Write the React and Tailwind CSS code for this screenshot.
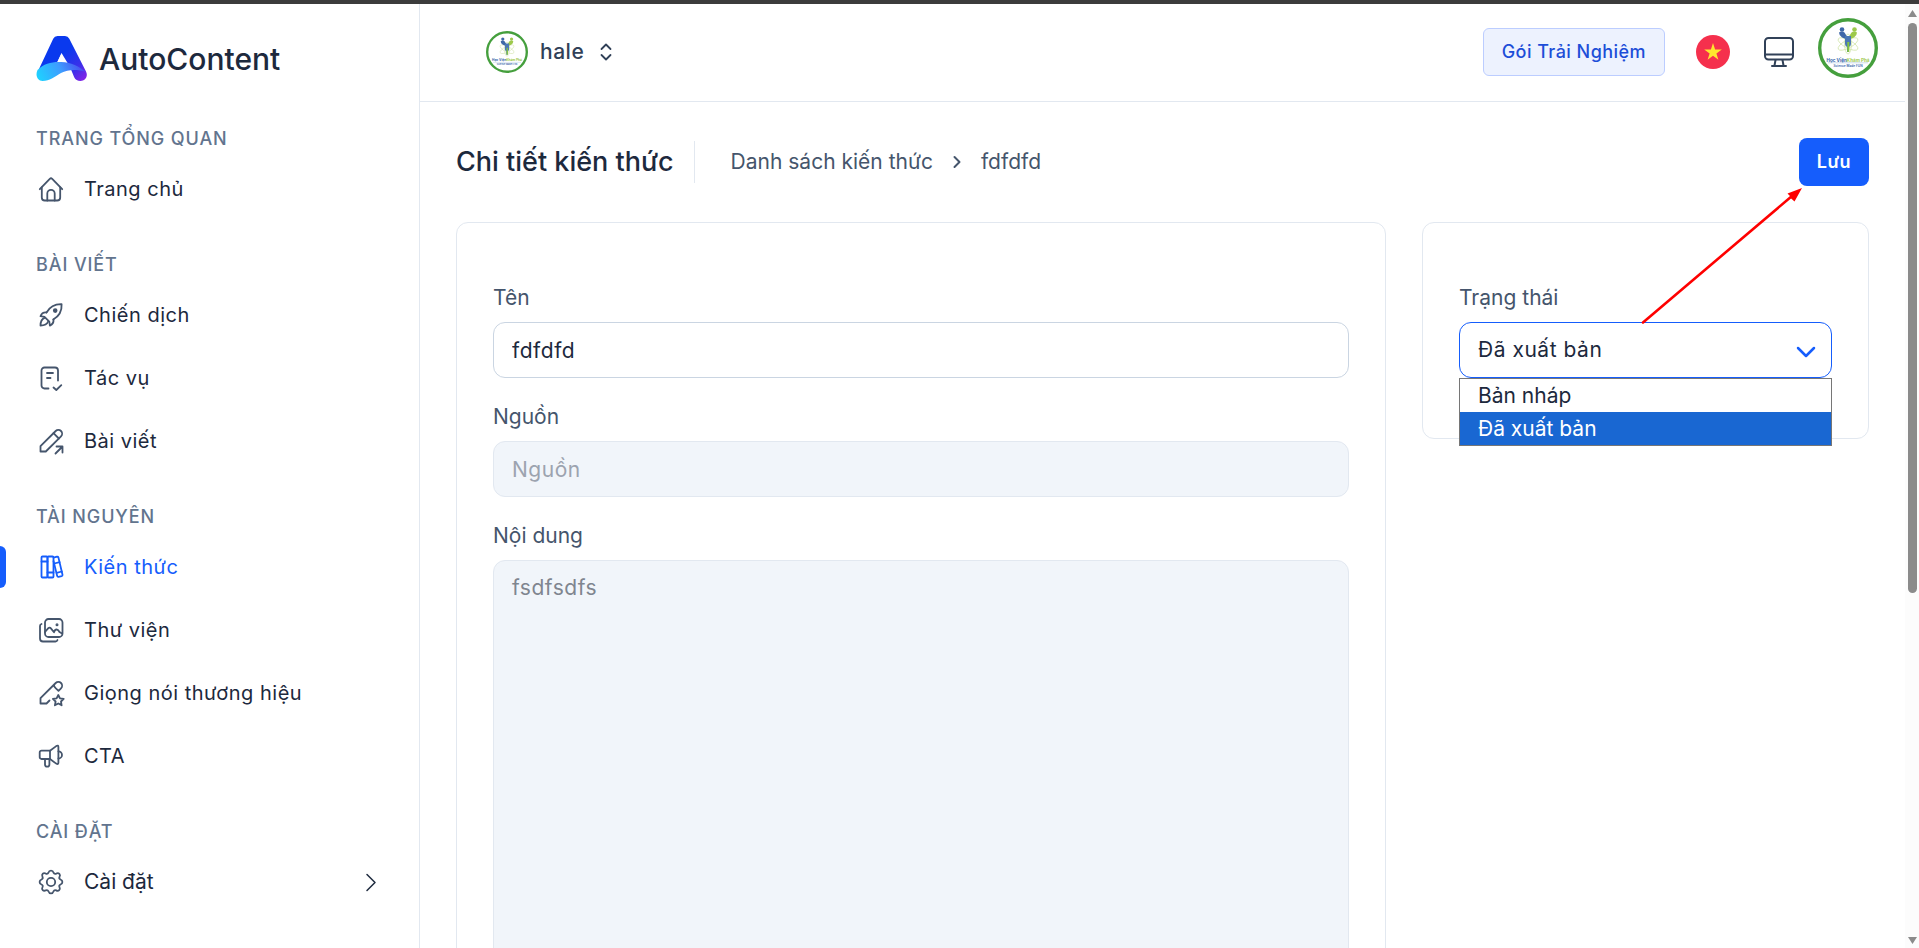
import React, { useState } from "react";

/* ---------- icons ---------- */

const Icon = ({ children, size = "size-7", strokeWidth = 1.8 }) => (
  <svg
    className={`${size} shrink-0`}
    viewBox="0 0 28 28"
    fill="none"
    stroke="currentColor"
    strokeWidth={strokeWidth}
    strokeLinecap="round"
    strokeLinejoin="round"
    aria-hidden="true"
  >
    {children}
  </svg>
);

const HomeIcon = () => (
  <Icon>
    <path d="M2.8 14.2 12.8 3.8q1.2-1.1 2.4 0L25.2 14.2" />
    <path d="M4.800 12.500V22.500a3 3 0 0 0 3 3h12.400a3 3 0 0 0 3-3V12.500" />
    <path d="M10.300 25.500V18.500a3.700 3.700 0 0 1 7.400 0v7" />
  </Icon>
);

const RocketIcon = () => (
  <Icon>
    <path d="M9.500 11.500C13 5.500 18 3 24.600 3.200c.4 6.600-2.200 11.700-8.300 15.300" />
    <path d="M9.500 11.500c-3-.3-5 1.100-6 3.700l4 .6 4.800 4.800.6 4c2.600-1.200 3.900-3.300 3.600-6.100" />
    <path d="M7.500 16.800c-3.300 1.400-4 4.300-4 7.700 3.400 0 6.400-.7 7.700-4" />
    <circle cx="18.200" cy="9.600" r="1.400" fill="currentColor" />
  </Icon>
);

const TaskIcon = () => (
  <Icon>
    <path d="M11.500 24.500H7.500a3 3 0 0 1-3-3V6.500a3 3 0 0 1 3-3h10.500a3 3 0 0 1 3 3v10" />
    <path d="M10 9h6M10 14h3.500" />
    <path d="m16.500 23.500 2.800 2.500 5-4.800" />
  </Icon>
);

const PenShareIcon = () => (
  <Icon>
    <path d="M3.500 24.500v-5.300L18.700 4a3.700 3.700 0 0 1 5.300 5.300L8.800 24.500z" />
    <path d="m16.500 6.200 5.300 5.300" />
    <path d="m18.500 26.500 7-7M19.500 19.500h6v6" />
  </Icon>
);

const BooksIcon = () => (
  <Icon>
    <rect x="4.500" y="3.500" width="6" height="21" rx="1" />
    <rect x="10.500" y="3.500" width="6" height="21" rx="1" />
    <path d="m16.500 4.600 3.600-1q1-.2 1.300.8l4.100 17.400q.2 1-.8 1.300l-3.200.8q-1 .2-1.300-.8L16.500 8" />
    <path d="M4.500 8.500h6M10.500 19.500h6M17.300 10.500l5.300-1.300M19.600 19.800l5.200-1.300" />
  </Icon>
);

const GalleryIcon = () => (
  <Icon>
    <rect x="8" y="3" width="17.500" height="18" rx="3.500" />
    <path d="M4.500 8Q3 8.500 3 10v12.500a3 3 0 0 0 3 3h12.500q1.500 0 2-1.500" />
    <path d="m8 16 3.300-3.800q1.400-1.200 2.600.2l3.100 3.800q1-3 2.800-2.700 1.500.2 2.700 2.500l2.500 1.500" />
    <circle cx="20" cy="8.700" r="0.600" fill="currentColor" />
  </Icon>
);

const PenStarIcon = () => (
  <Icon>
    <path d="M12.500 21.500 9.500 24.500h-6v-5.300L18.700 4a3.700 3.700 0 0 1 5.300 5.300l-2.500 2.500-2.600-2.400q-2-2-2-3.500" />
    <path d="m21.300 16 1.700 3.300 3.700.6-2.700 2.600.6 3.800-3.300-1.800-3.400 1.800.7-3.800-2.700-2.600 3.700-.6z" />
  </Icon>
);

const MegaphoneIcon = () => (
  <Icon>
    <path d="M4.500 8.700H13V17H4.500A1.800 1.800 0 0 1 2.700 15.200v-4.700a1.800 1.800 0 0 1 1.800-1.800z" />
    <path d="m13 8.700 6.200-4.600q2.200-1.400 2.200 1V20.600q0 2.300-2.200 1L13 17" />
    <path d="M8 17v5.500a2.200 2.200 0 0 0 4.400 0V17" />
    <path d="M21.400 9.300a3.600 3.600 0 0 1 0 7.200" />
  </Icon>
);

const GearIcon = () => (
  <Icon>
    <circle cx="14" cy="14" r="4.200" />
    <path d="M11.500 4.600Q12 2.600 14 2.600T16.500 4.600Q17.300 6.400 19.200 5.600 21.200 4.700 22.400 5.900T22.500 8.900Q21.700 10.700 23.500 11.500 25.400 12.200 25.400 14T23.500 16.500Q21.700 17.300 22.500 19.100 23.400 21 22.200 22.200T19.200 22.400Q17.300 21.600 16.500 23.400 16 25.400 14 25.400T11.500 23.400Q10.700 21.600 8.800 22.400 6.900 23.300 5.700 22.100T5.500 19.100Q6.300 17.300 4.500 16.500 2.600 15.800 2.600 14T4.500 11.500Q6.300 10.700 5.500 8.900 4.600 6.900 5.800 5.700T8.800 5.600Q10.700 6.400 11.500 4.600z" />
  </Icon>
);

const MonitorIcon = () => (
  <svg
    className="size-8"
    viewBox="0 0 32 32"
    fill="none"
    stroke="currentColor"
    strokeWidth="2"
    strokeLinecap="round"
    strokeLinejoin="round"
    aria-hidden="true"
  >
    <rect x="2" y="3" width="28" height="21.500" rx="3.500" />
    <path d="M2 19.500h28M12.500 25l-1 5.500M19.500 25l1 5.500M9 31h14" />
  </svg>
);

const AppLogo = () => (
  <svg className="h-[45px] w-[51px] shrink-0" viewBox="0 0 51 45" aria-hidden="true">
    <defs>
      <linearGradient id="logo-body" x1="0" y1="0" x2="1" y2="1">
        <stop offset="0.450" stopColor="#0a39ee" />
        <stop offset="0.750" stopColor="#3b30ea" />
        <stop offset="1" stopColor="#9222e6" />
      </linearGradient>
      <linearGradient id="logo-wave" x1="0" y1="0.600" x2="1" y2="0.400">
        <stop offset="0" stopColor="#1fd0ff" />
        <stop offset="0.500" stopColor="#3e9dff" />
        <stop offset="1" stopColor="#4a45ee" />
      </linearGradient>
    </defs>
    <path
      d="M21.500 0h7.500q3 0 4.300 2.700L50 35.500c2.500 5-1 9.500-5.500 9.500q-4.500 0-6.300-3.800L34 31l-8.500-14L17 35 3 33 17.200 2.700Q18.500 0 21.500 0z"
      fill="url(#logo-body)"
    />
    <path d="M25.500 17.500 21.500 26h8z" fill="#fff" />
    <path
      d="M1.500 34C8 27 17 25.500 25 26c11 .5 19 5 25 10-9-3-18-2.500-25 1-7 4-11 8-18.500 8C1.500 45-1 39.500 1.500 34z"
      fill="url(#logo-wave)"
    />
  </svg>
);

// Round academy badge, used for the workspace and for the account
const Badge = ({ className }) => (
  <svg className={className} viewBox="0 0 60 60" role="img" aria-label="Học Viện Khám Phá">
    <circle cx="30" cy="30" r="28.300" fill="#fff" stroke="#459f3d" strokeWidth="3.400" />
    <g fill="none" stroke="#d3e6ae" strokeWidth="0.800">
      <ellipse cx="30" cy="26" rx="11" ry="4" transform="rotate(28 30 26)" />
      <ellipse cx="30" cy="26" rx="11" ry="4" transform="rotate(-28 30 26)" />
      <ellipse cx="30" cy="26" rx="3.500" ry="10" />
    </g>
    <circle cx="24" cy="11.500" r="2.300" fill="#3f68a8" />
    <circle cx="36.500" cy="11.500" r="2.300" fill="#9dc94b" />
    <path d="M21 14.500q3-2 5.500 0l2.500 4v3l-5-2q-3-2-3-5z" fill="#3f68a8" />
    <path d="M39 14.500q-3-2-5.500 0L31 18.500v3l5-2q3-2 3-5z" fill="#9dc94b" />
    <path d="M27 18h6v8q0 2-2 3v5h-2v-5q-2-1-2-3z" fill="#4b78b5" />
    <path d="M29.300 24h2v10h-2z" fill="#83c43d" />
    <text x="30" y="43.500" textAnchor="middle" fontSize="4.600" fontWeight="700" fontFamily="Inter, sans-serif" fill="#3565ab">
      Học Viện<tspan fill="#9dc94b">Khám Phá</tspan>
    </text>
    <path d="M10 44.800h40" stroke="#9db6d8" strokeWidth="0.500" />
    <text x="30" y="49" textAnchor="middle" fontSize="3.200" fontWeight="600" fontFamily="Inter, sans-serif" fill="#3565ab">
      Science Made FUN
    </text>
  </svg>
);

/* ---------- sidebar ---------- */

const MENU = [
  {
    title: "TRANG TỔNG QUAN",
    items: [{ label: "Trang chủ", icon: HomeIcon }],
  },
  {
    title: "BÀI VIẾT",
    items: [
      { label: "Chiến dịch", icon: RocketIcon },
      { label: "Tác vụ", icon: TaskIcon },
      { label: "Bài viết", icon: PenShareIcon },
    ],
  },
  {
    title: "TÀI NGUYÊN",
    items: [
      { label: "Kiến thức", icon: BooksIcon, active: true },
      { label: "Thư viện", icon: GalleryIcon },
      { label: "Giọng nói thương hiệu", icon: PenStarIcon },
      { label: "CTA", icon: MegaphoneIcon },
    ],
  },
  {
    title: "CÀI ĐẶT",
    items: [{ label: "Cài đặt", icon: GearIcon, expandable: true }],
  },
];

const MenuItem = ({ label, icon: ItemIcon, active, expandable }) => (
  <li className="relative">
    {active && (
      <span className="absolute inset-y-0 left-0 w-1.5 rounded-r-md bg-[#155dfc]" />
    )}
    <a
      href="#"
      className={`flex h-[42px] items-center gap-[19px] pr-[34px] pl-[37px] ${
        expandable ? "text-[21px]" : "text-xl tracking-wide"
      } ${active ? "text-[#155dfc]" : "text-slate-800"}`}
    >
      <span className={active ? "text-[#155dfc]" : "text-slate-600"}>
        <ItemIcon />
      </span>
      <span className="flex-1">{label}</span>
      {expandable && (
        <Icon strokeWidth={1.5}>
          <path d="m10 6.500 8 8-8 8" />
        </Icon>
      )}
    </a>
  </li>
);

const Sidebar = () => (
  <aside className="w-[420px] shrink-0 border-r border-slate-200 pt-8">
    <a href="#" className="flex items-start gap-3 pl-9 text-slate-800">
      <AppLogo />
      <span className="text-[30px] leading-[47px] font-medium">AutoContent</span>
    </a>
    <nav className="mt-[41px] space-y-10">
      {MENU.map((section) => (
        <div key={section.title}>
          <h2 className="pl-9 text-lg leading-[30px] font-medium tracking-wider text-slate-500">
            {section.title}
          </h2>
          <ul className="mt-3.5 space-y-[21px]">
            {section.items.map((item) => (
              <MenuItem key={item.label} {...item} />
            ))}
          </ul>
        </div>
      ))}
    </nav>
  </aside>
);

/* ---------- header ---------- */

const Header = () => (
  <header className="flex h-[98px] items-start justify-between border-b border-slate-200 pr-[27px] pl-[66px]">
    <button className="mt-[27px] flex items-center text-slate-700">
      <Badge className="size-[42px]" />
      <span className="ml-3 text-[21px] font-medium tracking-wide">hale</span>
      <Icon size="ml-2 size-7">
        <path d="m9.500 11 4.500-4.500 4.500 4.500M9.500 17l4.500 4.500 4.500-4.500" />
      </Icon>
    </button>

    <div className="flex items-start">
      <button className="mt-6 h-12 rounded-md border border-[#bccdff] bg-[#edf2fe] px-[18px] text-lg font-medium tracking-wide text-[#1d4ed8]">
        Gói Trải Nghiệm
      </button>
      <button className="mt-[31px] ml-[31px]" aria-label="Tiếng Việt">
        <svg className="size-[34px]" viewBox="0 0 34 34" aria-hidden="true">
          <circle cx="17" cy="17" r="17" fill="#f5304d" />
          <path d="m17 8 2.100 6.400h6.700l-5.400 4 2 6.300-5.400-3.900-5.400 3.900 2-6.300-5.400-4h6.700z" fill="#ffe62e" />
        </svg>
      </button>
      <button className="mt-[31px] ml-[33px] text-slate-700" aria-label="Giao diện">
        <MonitorIcon />
      </button>
      <button className="mt-3.5 ml-[23px]" aria-label="Tài khoản">
        <Badge className="size-[60px]" />
      </button>
    </div>
  </header>
);

/* ---------- form ---------- */

const LABEL = "block text-[21px] leading-[30px] text-slate-600";
const FIELD =
  "block w-full rounded-xl border px-[18px] text-[21px] tracking-wide outline-none";

const STATUSES = ["Bản nháp", "Đã xuất bản"];

const StatusSelect = () => {
  const [status, setStatus] = useState("Đã xuất bản");
  const [open, setOpen] = useState(true);

  const choose = (value) => {
    setStatus(value);
    setOpen(false);
  };

  return (
    <div className="relative mt-[9px]">
      <select
        id="status"
        value={status}
        onChange={(e) => choose(e.target.value)}
        className={`${FIELD} h-14 appearance-none border-[#155dfc] bg-white text-slate-800`}
      >
        {STATUSES.map((s) => (
          <option key={s}>{s}</option>
        ))}
      </select>
      <svg
        className="pointer-events-none absolute top-5 right-4 size-5 text-[#155dfc]"
        viewBox="0 0 20 20"
        fill="none"
        stroke="currentColor"
        strokeWidth="2.500"
        strokeLinecap="round"
        strokeLinejoin="round"
        aria-hidden="true"
      >
        <path d="m2 6 8 8 8-8" />
      </svg>

      {open && (
        <ul role="listbox" className="absolute inset-x-0 top-full border border-[#767676] bg-white">
          {STATUSES.map((s) => (
            <li
              key={s}
              role="option"
              aria-selected={s === status}
              onClick={() => choose(s)}
              className={`px-[18px] text-[21px] leading-[33px] ${
                s === status ? "bg-[#1967d2] text-white" : "text-slate-800"
              }`}
            >
              {s}
            </li>
          ))}
        </ul>
      )}
    </div>
  );
};

const KnowledgeForm = () => {
  const [name, setName] = useState("fdfdfd");

  return (
    <section className="min-w-0 flex-1 rounded-xl border border-slate-200 px-9 pt-[60px] pb-9">
      <div>
        <label htmlFor="name" className={LABEL}>Tên</label>
        <input
          id="name"
          value={name}
          onChange={(e) => setName(e.target.value)}
          className={`${FIELD} mt-[9px] h-14 border-slate-300 text-slate-800`}
        />
      </div>
      <div className="mt-6">
        <label htmlFor="source" className={LABEL}>Nguồn</label>
        <input
          id="source"
          disabled
          placeholder="Nguồn"
          className={`${FIELD} mt-[9px] h-14 border-slate-200 bg-[#f1f5fa] placeholder:text-[#9ca3af]`}
        />
      </div>
      <div className="mt-6">
        <label htmlFor="content" className={LABEL}>Nội dung</label>
        <textarea
          id="content"
          disabled
          rows={20}
          defaultValue="fsdfsdfs"
          className={`${FIELD} mt-[9px] resize-none border-slate-200 bg-[#f1f5fa] py-3 leading-[30px] text-[#7f858f]`}
        />
      </div>
    </section>
  );
};

/* ---------- page ---------- */

const Scrollbar = () => (
  <div className="flex w-3.5 shrink-0 flex-col items-center bg-[#fcfcfc] pt-1.5 pb-1" aria-hidden="true">
    <svg className="h-[7px] w-[9px]" viewBox="0 0 9 7"><path d="M4.500 0 9 7H0z" fill="#8b8b8b" /></svg>
    <span className="mt-1.5 h-[61%] w-[9px] rounded-full bg-[#8b8b8b]" />
    <svg className="mt-auto h-[7px] w-[9px]" viewBox="0 0 9 7"><path d="M0 0h9L4.500 7z" fill="#8b8b8b" /></svg>
  </div>
);

const App = () => (
  <div className="flex h-screen flex-col overflow-hidden border-t-4 border-[#3c3c3c] bg-white font-[Inter,sans-serif]">
    <div className="flex min-h-0 flex-1">
      <Sidebar />

      <div className="min-w-0 flex-1">
        <Header />
        <main className="px-9 pt-9">
          <div className="flex items-center">
            <h1 className="text-[27px] font-medium text-slate-800">Chi tiết kiến thức</h1>
            <span className="mr-6 ml-5 h-[42px] w-px bg-slate-200" />
            <nav className="ml-3 flex items-center text-[21px] text-slate-600">
              <a href="#">Danh sách kiến thức</a>
              <Icon size="mx-2.5 size-7" strokeWidth={2}>
                <path d="m11.500 9 5 5-5 5" />
              </Icon>
              <span>fdfdfd</span>
            </nav>
            <div className="relative ml-auto">
              <button className="h-12 rounded-lg bg-[#155dfc] px-[18px] text-lg font-semibold tracking-wide text-white">
                Lưu
              </button>
              {/* pointer from the status field up to the save button */}
              <svg
                className="pointer-events-none absolute top-full right-[67px] z-10 h-[138px] w-[162px]"
                viewBox="0 0 162 138"
                aria-hidden="true"
              >
                <path d="M3 136.500 152 10" stroke="#fe0000" strokeWidth="2.600" strokeLinecap="round" />
                <path d="m162 2-14.500 5.500 3 3-.5 1 4.500 4z" fill="#fe0000" />
              </svg>
            </div>
          </div>

          <div className="mt-9 flex items-start gap-9">
            <KnowledgeForm />
            <section className="w-[447px] shrink-0 rounded-xl border border-slate-200 px-9 pt-[60px] pb-[60px]">
              <label htmlFor="status" className={LABEL}>Trạng thái</label>
              <StatusSelect />
            </section>
          </div>
        </main>
      </div>

      <Scrollbar />
    </div>
  </div>
);

export default App;
